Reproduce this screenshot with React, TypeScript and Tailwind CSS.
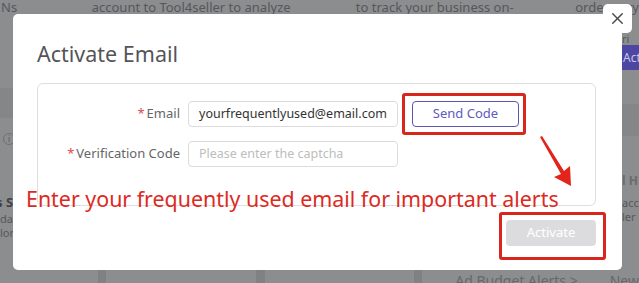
import { X } from 'lucide-react';

// background page, dimmed by the modal overlay
function Backdrop() {
  return (
    <div className="flex h-full flex-col text-[13px] text-[#55585b]">
      {/* top row of cut-off card text */}
      <div className="flex h-[14px] items-end whitespace-nowrap leading-[14px]">
        <span className="w-[92px] pl-[1px]">Ns</span>
        <span className="w-[265px]">account to Tool4seller to analyze</span>
        <span className="w-[220px]">to track your business on-</span>
        <span className="w-[52px]">order</span>
        <span>ry</span>
      </div>
      <div className="flex flex-1">
        {/* left edge */}
        <div className="flex w-[13px] flex-col whitespace-nowrap">
          <div className="mt-[74px] h-[30px] bg-[#848688]" />
          <div className="mt-[10px] flex h-[22px] w-[13px] items-center justify-end">
            <span className="-mr-[2px] flex h-[12px] w-[12px] items-center justify-center rounded-full border border-[#6f7173] text-[8px] leading-none">
              i
            </span>
          </div>
          <div className="mt-[44px] -ml-[4px] font-bold text-[#3f4143] leading-[16px]">s S</div>
          <div className="mt-[2px] text-[11px] leading-[14px]">da</div>
          <div className="text-[11px] leading-[14px]">lor</div>
        </div>
        <div className="flex-1" />
        {/* right edge */}
        <div className="flex w-[17px] flex-col whitespace-nowrap">
          <div className="mt-[19px] text-[11px] leading-[12px]">ri</div>
          <div className="flex h-[25px] items-center bg-[#4c47a3] pl-[1px] text-[12px] text-[#c9c7e6]">
            Acti
          </div>
          <div className="mt-[34px] h-[32px] bg-[#848688]" />
          <div className="mt-[38px] font-bold text-[12px] leading-[14px] text-[#6a6c6e]">l H</div>
          <div className="mt-[8px] text-[11px] leading-[14px]">acco</div>
          <div className="text-[11px] leading-[14px]">ler</div>
        </div>
      </div>
      {/* bottom strip */}
      <div className="flex h-[13px] items-start whitespace-nowrap text-[14px] leading-[16px] text-[#66686a]">
        <div className="ml-[98px] h-[13px] w-[14px] bg-[#7f8183]" />
        <div className="ml-[150px] h-[13px] w-[14px] bg-[#7f8183]" />
        <div className="ml-[149px] h-[13px] w-[14px] bg-[#7f8183]" />
        <span className="ml-[33px] mt-[3px]">Ad Budget Alerts &gt;</span>
        <span className="ml-[32px] mt-[3px]">New</span>
      </div>
    </div>
  );
}

export default function App() {
  return (
    <div className="relative h-[283px] w-[639px] overflow-hidden bg-[#8b8d8f] font-['Noto_Sans',sans-serif]">
      <Backdrop />

      {/* Modal */}
      <div className="absolute left-[13px] top-[14px] h-[256px] w-[609px] rounded-[5px] bg-white pl-[24px] pr-[26px] pt-[25px]">
        <h2 className="text-[21.5px] leading-[29px] text-[#555459]">Activate Email</h2>

        <div className="mt-[15px] h-[123px] rounded-[6px] border border-[#dedede] pt-[17px]">
          <div className="flex items-center">
            <label className="w-[150px] pr-[8px] text-right text-[13px] text-[#666]">
              <span className="mr-[2px] text-[#e04a4a]">*</span>Email
            </label>
            <div className="flex h-[26px] w-[210px] items-center rounded-[4px] border border-[#dcdcdc] px-[10px] text-[12.5px] text-[#333]">
              yourfrequentlyused@email.com
            </div>
            <button className="ml-[14px] h-[26px] w-[107px] rounded-[4px] border border-[#5b54b0] text-[13px] text-[#6159c0]">
              Send Code
            </button>
          </div>
          <div className="mt-[14px] flex items-center">
            <label className="w-[150px] pr-[8px] text-right text-[13px] text-[#666]">
              <span className="mr-[2px] text-[#e04a4a]">*</span>Verification Code
            </label>
            <div className="flex h-[26px] w-[210px] items-center rounded-[4px] border border-[#dcdcdc] px-[10px] text-[12.5px] text-[#bdbdbd]">
              Please enter the captcha
            </div>
          </div>
        </div>

        <div className="mt-[14px] flex justify-end">
          <button className="h-[26px] w-[90px] rounded-[4px] bg-[#dcdcdf] text-[13px] text-white">
            Activate
          </button>
        </div>

        {/* annotations */}
        <div className="absolute left-[389px] top-[79px] h-[42px] w-[124px] rounded-[3px] border-[3px] border-[#d8261c]" />
        <div className="absolute left-[486px] top-[198px] h-[48px] w-[107px] rounded-[3px] border-[3px] border-[#d8261c]" />
        <p className="absolute left-[13px] top-[171px] whitespace-nowrap text-[21.4px] leading-[28px] text-[#dd2a1f]">
          Enter your frequently used email for important alerts
        </p>
        <svg className="absolute left-[526px] top-[122px]" width="36" height="52" viewBox="0 0 36 52">
          <path d="M1 1 L3 0 L25 35 L31 30 L32 50 L15 41 L22 38 Z" fill="#e3241b" />
        </svg>
      </div>

      {/* close button */}
      <button className="absolute left-[603px] top-[4px] flex h-[29px] w-[29px] items-center justify-center rounded-[5px] bg-white text-[#4a4a4a]">
        <X size={19} strokeWidth={1.8} />
      </button>
    </div>
  );
}
